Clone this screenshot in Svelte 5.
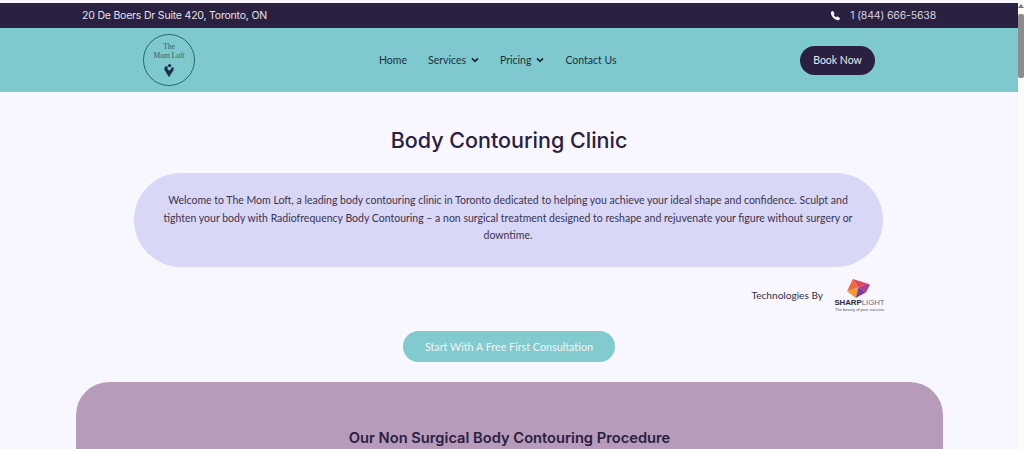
<script>
  const nav = [
    { label: 'Home' },
    { label: 'Services', caret: true },
    { label: 'Pricing', caret: true },
    { label: 'Contact Us' }
  ];
</script>

<div class="window">
  <div class="page">
    <div class="topbar">
      <span class="address">20 De Boers Dr Suite 420, Toronto, ON</span>
      <span class="phone">
        <svg class="phone-icon" viewBox="0 0 24 24" aria-hidden="true">
          <path d="M6.6 2.6 9.7 7c.4.5.3 1.2-.1 1.700L8 10.400c1 2.300 3.200 4.600 5.600 5.600l1.700-1.600c.5-.4 1.200-.5 1.700-.1l4.400 3.100c.6.400.7 1.200.3 1.800l-1.500 2.100c-.5.700-1.300 1.100-2.200 1C9.800 21.500 2.500 14.200 1.900 6c-.1-.9.300-1.700 1-2.200L4.800 2.300c.6-.4 1.400-.3 1.800.3Z"/>
        </svg>
        1 (844) 666-5638
      </span>
    </div>

    <header class="mainbar">
      <div class="logo">
        <span class="logo-text">The<br />Mom Loft</span>
        <svg class="logo-mark" viewBox="0 0 16 20" aria-hidden="true">
          <path d="M8 19 2.300 9.500C1 7.200 2.400 4.200 5 4.300c.6 0 1 .2 1.400.5C5.500 6.500 6 8.600 7.500 9.600 9 10.600 10 9.500 10.600 8 11 6.800 11.800 5.600 13 5.800c1.400.3 1.800 2.200.9 3.800Z"/>
          <circle cx="8.800" cy="3.400" r="2.200"/>
        </svg>
      </div>

      <nav class="nav">
        {#each nav as item}
          <span class="nav-item">
            {item.label}
            {#if item.caret}
              <svg class="caret" viewBox="0 0 10 7" aria-hidden="true"><path d="M1.200 1.400 5 5.200l3.800-3.800" /></svg>
            {/if}
          </span>
        {/each}
      </nav>

      <span class="book">Book Now</span>
    </header>

    <main class="content">
      <h1>Body Contouring Clinic</h1>

      <p class="intro">
        Welcome to The Mom Loft, a leading body contouring clinic in Toronto dedicated to helping you achieve your ideal shape and confidence. Sculpt and tighten your body with Radiofrequency Body Contouring – a non surgical treatment designed to reshape and rejuvenate your figure without surgery or downtime.
      </p>

      <div class="tech">
        <span class="tech-label">Technologies By</span>
        <div class="sharp">
          <svg class="gem" viewBox="0 0 24 20" aria-hidden="true">
            <polygon points="6,0 22,5 12,9" fill="#e0455f" />
            <polygon points="22,5 24,6 20,14 12,9" fill="#a8408c" />
            <polygon points="6,0 12,9 0,13" fill="#ee6a3c" />
            <polygon points="0,13 12,9 9,20" fill="#f59a2e" />
            <polygon points="12,9 20,14 9,20" fill="#7d3a96" />
          </svg>
          <span class="sharp-name"><b>SHARP</b>LIGHT</span>
          <span class="sharp-tag">The beauty of your success</span>
        </div>
      </div>

      <span class="cta">Start With A Free First Consultation</span>

      <section class="procedure">
        <h2>Our Non Surgical Body Contouring Procedure</h2>
      </section>
    </main>
  </div>

  <div class="scrollbar">
    <span class="arrow"></span>
    <span class="thumb"></span>
  </div>
</div>

<style>
  :global(html), :global(body) {
    margin: 0;
    height: 449px;
    overflow: hidden;
  }

  .window {
    display: flex;
    height: 449px;
    width: 1024px;
    overflow: hidden;
    background: #f8f6fe;
    font-family: "Lato", "Liberation Sans", sans-serif;
    color: #2a2040;
  }

  .page {
    flex: 1;
    min-width: 0;
    overflow: hidden;
  }

  .topbar {
    box-sizing: border-box;
    height: 25px;
    margin-top: 3px;
    padding: 0 82px;
    display: flex;
    align-items: center;
    justify-content: space-between;
    background: #2a2040;
    color: #e4e0ea;
    font-family: "Inter", "Liberation Sans", sans-serif;
    font-size: 10.500px;
    letter-spacing: -0.2px;
  }

  .phone {
    display: flex;
    align-items: center;
    gap: 9px;
    font-size: 10.500px;
    letter-spacing: -0.15px;
    color: #d8d4e0;
  }

  .phone-icon {
    width: 11px;
    height: 11px;
    fill: #f4f2f6;
  }

  .mainbar {
    height: 64px;
    box-sizing: border-box;
    padding: 0 143px;
    display: flex;
    align-items: center;
    background: #7ec9ce;
  }

  .logo {
    box-sizing: border-box;
    width: 52px;
    height: 52px;
    border: 1px solid #2c6670;
    border-radius: 50%;
    display: flex;
    flex-direction: column;
    align-items: center;
    padding-top: 7px;
    flex: none;
  }

  .logo-text {
    font-family: "Liberation Serif", serif;
    font-size: 7.500px;
    line-height: 9px;
    text-align: center;
    color: #2f5f6c;
  }

  .logo-mark {
    width: 12px;
    height: 15px;
    margin-top: 3px;
    fill: #1d2f4c;
  }

  .nav {
    margin-left: 184px;
    display: flex;
    align-items: center;
    gap: 21px;
    font-size: 10.500px;
    color: #20303f;
  }

  .nav-item {
    display: inline-flex;
    align-items: center;
    gap: 5px;
    white-space: nowrap;
  }

  .caret {
    width: 8px;
    height: 6px;
    fill: none;
    stroke: #1f2438;
    stroke-width: 2;
  }

  .book {
    margin-left: auto;
    width: 75px;
    height: 29px;
    margin-top: 1px;
    padding-bottom: 2px;
    box-sizing: border-box;
    border-radius: 15px;
    background: #2a2040;
    color: #ece9f0;
    font-size: 10.500px;
    display: flex;
    align-items: center;
    justify-content: center;
  }

  .content {
    display: flex;
    flex-direction: column;
    align-items: center;
  }

  h1 {
    margin: 33px 0 0;
    font-size: 21.500px;
    line-height: 30px;
    font-weight: 500;
    font-family: "Inter", "Liberation Sans", sans-serif;
    color: #2a2040;
  }

  .intro {
    box-sizing: border-box;
    width: 749px;
    height: 94px;
    margin: 18px 0 0 -2px;
    padding: 19px 28px 0;
    border-radius: 47px;
    background: #d9d7f6;
    font-size: 10.500px;
    line-height: 17.500px;
    text-align: center;
    color: #3a3550;
  }

  .tech {
    align-self: flex-end;
    margin: 12px 134px 0 0;
    display: flex;
    align-items: center;
    gap: 12px;
  }

  .tech-label {
    font-size: 10.100px;
    color: #33304a;
    margin-top: -1px;
  }

  .sharp {
    display: flex;
    flex-direction: column;
    align-items: center;
    width: 49px;
  }

  .gem {
    width: 23px;
    height: 19px;
    margin-right: 3px;
  }

  .sharp-name {
    margin-top: 1px;
    font-family: "Liberation Sans", sans-serif;
    font-size: 7.800px;
    line-height: 8px;
    color: #6a6a78;
    white-space: nowrap;
  }

  .sharp-name b {
    color: #2a2a38;
    font-weight: 600;
  }

  .sharp-tag {
    font-family: "Liberation Sans", sans-serif;
    font-size: 4px;
    line-height: 5px;
    color: #555;
    white-space: nowrap;
  }

  .cta {
    box-sizing: border-box;
    margin: 19px 0 0;
    width: 212px;
    height: 31px;
    padding-bottom: 1px;
    border-radius: 16px;
    background: #81cbcf;
    color: #f4f4f6;
    font-size: 10.750px;
    display: flex;
    align-items: center;
    justify-content: center;
  }

  .procedure {
    box-sizing: border-box;
    align-self: flex-start;
    width: 867px;
    height: 120px;
    margin: 20px 0 0 76px;
    padding-top: 47px;
    border-radius: 33px 33px 0 0;
    background: #b79bbb;
    text-align: center;
  }

  h2 {
    margin: 0;
    font-size: 14.700px;
    line-height: 18px;
    font-weight: 600;
    font-family: "Inter", "Liberation Sans", sans-serif;
    color: #2a2040;
  }

  .scrollbar {
    width: 6px;
    flex: none;
    background: #fbfbfb;
    display: flex;
    flex-direction: column;
    align-items: center;
    padding-top: 4px;
    box-sizing: border-box;
  }

  .arrow {
    width: 0;
    height: 0;
    border-left: 3px solid transparent;
    border-right: 3px solid transparent;
    border-bottom: 4px solid #7a7a7a;
  }

  .thumb {
    width: 6px;
    height: 64px;
    margin-top: 6px;
    border-radius: 2px;
    background: #8c8c8c;
  }
</style>
